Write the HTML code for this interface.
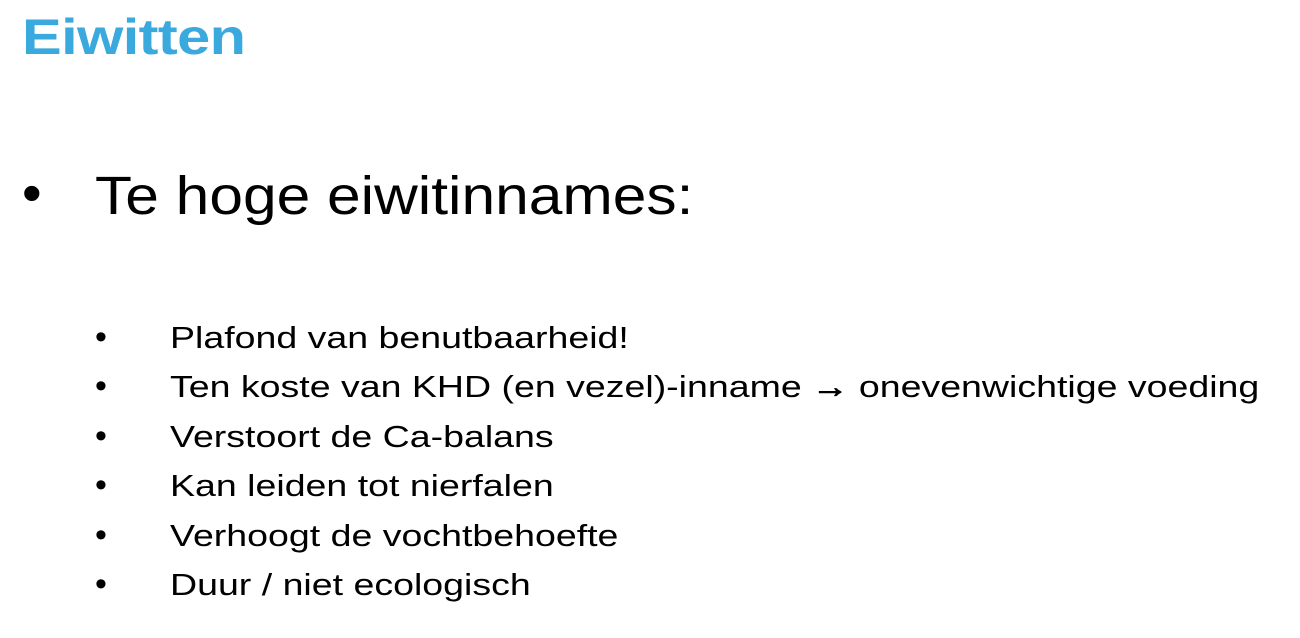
<!DOCTYPE html>
<html><head><meta charset="utf-8"><style>
html,body{margin:0;padding:0;}
body{width:1300px;height:638px;background:#fff;position:relative;overflow:hidden;font-family:"Liberation Sans",sans-serif;color:#000;}
.t{position:absolute;left:22px;top:8px;font-size:50px;font-weight:bold;color:#3aa9dd;letter-spacing:-0.5px;transform:scaleX(1.19);transform-origin:left top;}
.b{position:absolute;font-size:56px;}
.h{position:absolute;left:95px;top:165px;font-size:54px;white-space:nowrap;transform:scaleX(1.12);transform-origin:left top;}
.d{position:absolute;left:95px;font-size:34px;}
.l{position:absolute;left:170px;font-size:31px;white-space:nowrap;transform:scaleX(1.21);transform-origin:left top;}
.a{font-weight:bold;font-size:30px;-webkit-text-stroke:1px #000;}
</style></head><body>
<div class="t">Eiwitten</div>
<div class="b" style="left:22px;top:160px">•</div>
<div class="h">Te hoge eiwitinnames:</div>
<div class="d" style="top:318px">•</div><div class="l" style="top:320px">Plafond van benutbaarheid!</div>
<div class="d" style="top:367px">•</div><div class="l" style="top:369px">Ten koste van KHD (en vezel)-inname <span class="a">→</span> onevenwichtige voeding</div>
<div class="d" style="top:417px">•</div><div class="l" style="top:419px">Verstoort de Ca-balans</div>
<div class="d" style="top:466px">•</div><div class="l" style="top:468px">Kan leiden tot nierfalen</div>
<div class="d" style="top:516px">•</div><div class="l" style="top:518px">Verhoogt de vochtbehoefte</div>
<div class="d" style="top:565px">•</div><div class="l" style="top:567px">Duur / niet ecologisch</div>
</body></html>
